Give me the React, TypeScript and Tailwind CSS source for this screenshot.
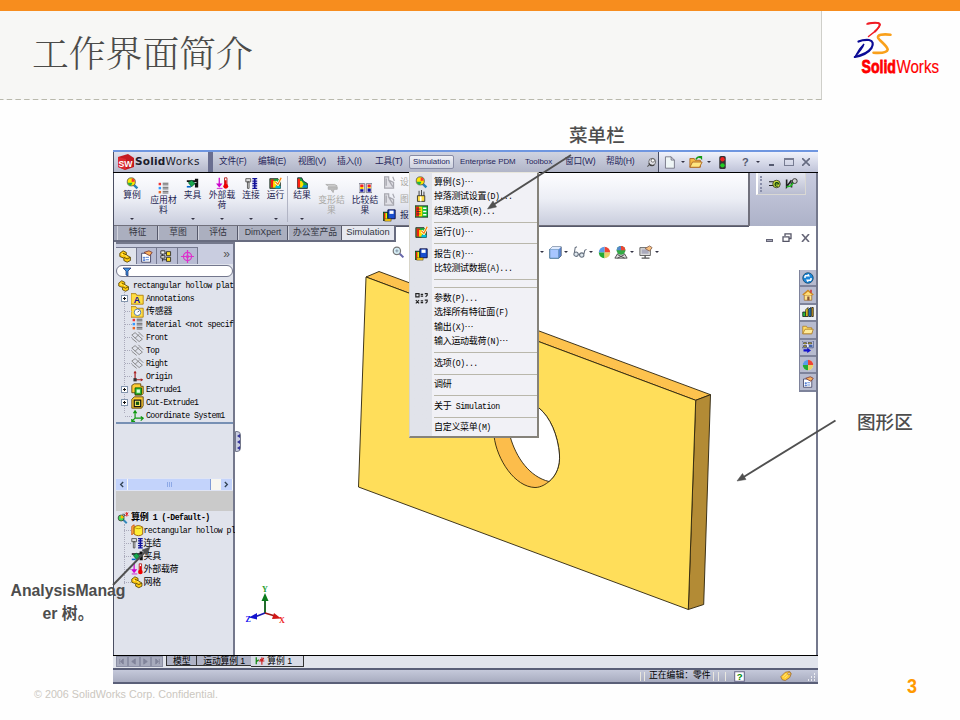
import React from "react";

const SONG = /([\u2026\u2e80-\u9fff\uff00-\uffef]+)/;

// Mixed text: full-width glyphs and half-width mono glyphs keep a 2:1 pitch.
function Song({ t, bold = false }: { t: string; bold?: boolean }) {
  return (
    <span className={"font-['Liberation_Mono','Noto_Sans_CJK_SC',monospace] text-[8px] leading-[12px] whitespace-pre " + (bold ? "font-bold" : "")}>
      {t.split(SONG).map((p, i) =>
        i % 2 ? (
          <span key={i} className="font-['Noto_Sans_CJK_SC',sans-serif] text-[9px] leading-[11px] tracking-[-0.3px]">{p}</span>
        ) : (
          <span key={i} className="text-[8.2px] tracking-[-0.54px]">{p}</span>
        )
      )}
    </span>
  );
}

type Name =
  | "lens" | "list" | "clamp" | "load" | "bolt" | "run" | "result" | "deform" | "compare" | "report" | "drop"
  | "param" | "part" | "prop" | "config" | "target" | "annot" | "sensor" | "plane" | "origin" | "extrude" | "cut"
  | "coord" | "solid" | "study" | "graph" | "globe" | "house" | "books" | "folder" | "palette" | "ball" | "scene"
  | "monitor" | "cube" | "glasses" | "zoom" | "doc" | "open" | "light" | "pin" | "plug" | "clip" | "tag" | "help" | "motion" | "reportGray";

const art: Record<Name, React.ReactNode> = {
  lens: (
    <>
      <path d="M9 9l5 5" stroke="#2a80b8" strokeWidth="3" />
      <circle cx="6.5" cy="6" r="5" fill="#ffe600" stroke="#555" />
      <path d="M2 7a5 5 0 0 0 4 4l2-4z" fill="#1fb24a" />
      <path d="M7 1.5a5 5 0 0 1 4 4L7 6z" fill="#f33" />
    </>
  ),
  list: (
    <>
      <path d="M2 1h3v3H2z" fill="#e33" /><path d="M2 6h3v3H2z" fill="#39f" /><path d="M2 11h3v3H2z" fill="#e62" />
      <path d="M7 1.5h7M7 3.5h7M7 6.5h7M7 8.5h7M7 11.5h7M7 13.5h7" stroke="#444" />
    </>
  ),
  clamp: (
    <>
      <path d="M1 5h11V3h2v9h-2V8H7" fill="none" stroke="#111" strokeWidth="2" />
      <path d="M3 7l4-3 4 4-4 4z" fill="#19a84c" stroke="#063" /><path d="M1 12h5" stroke="#06c" strokeWidth="2" />
    </>
  ),
  load: (
    <>
      <path d="M4 1v9" stroke="#c0c" strokeWidth="1.5" /><path d="M0 8h8l-4 5z" fill="#c0c" /><path d="M1 14h7" stroke="#c0c" />
      <path d="M10.5 1h3v9h-3z" fill="#fff" stroke="#a00" /><circle cx="12" cy="11.5" r="3" fill="#e00" /><path d="M12 4v8" stroke="#e00" strokeWidth="2" />
    </>
  ),
  bolt: (
    <>
      <path d="M1 2h6v4H1zM3 6h2v8H3z" fill="#ddd" stroke="#444" />
      <path d="M9 2h6M9 5h6M9 8h6M9 11h6M9 14h6" stroke="#119" strokeWidth="1.6" /><path d="M12 2v12" stroke="#119" strokeWidth="2" />
    </>
  ),
  run: (
    <>
      <path d="M1 2h10l3 3v9H1z" fill="#1fae3f" stroke="#222" /><path d="M2 3h4v10H2z" fill="#e21" /><path d="M5 5h4v8H5z" fill="#fd0" />
      <path d="M8 6l3 3 4-8" stroke="#ffd" strokeWidth="3.5" fill="none" /><path d="M8 6l3 3 4-8" stroke="#f70" strokeWidth="1.5" fill="none" /><path d="M8 11h6v3H8z" fill="#0bd" />
    </>
  ),
  result: (
    <>
      <path d="M2 1h5l2 4 5 3v6H2z" fill="#17a83b" stroke="#113" /><path d="M2 2h3v11H2z" fill="#f21" /><path d="M5 5h2l2 3v5H5z" fill="#fd0" /><path d="M9 10h5v3H7z" fill="#08d" />
    </>
  ),
  deform: (
    <>
      <path d="M1 3h11l3 2H4z" fill="#ddd" stroke="#aaa" /><path d="M4 6h11v3h-4l-1 4-3-4H4z" fill="#bbb" stroke="#aaa" />
    </>
  ),
  compare: (
    <>
      <path d="M0 2h7v11H0z" fill="#fff" stroke="#667" /><path d="M9 2h7v11H9z" fill="#fff" stroke="#667" />
      <path d="M1.5 3h4v3h-4zM10.500 3h4v3h-4z" fill="#e22" /><path d="M1.5 6h4v3h-4zM10.500 6h4v2h-4z" fill="#fc0" /><path d="M1.5 9h4v3h-4zM10.500 8h4v4h-4z" fill="#119" />
    </>
  ),
  report: (
    <>
      <path d="M0 4h7v10H0z" fill="#0b3" stroke="#111" /><path d="M1 5h2v8H1z" fill="#e11" /><path d="M3 5h2v8H3z" fill="#fd0" />
      <path d="M6 1h9v11H6z" fill="#1a4fd0" stroke="#003" /><path d="M8 2h5v4H8z" fill="#fff" /><path d="M2 12h8v3H2z" fill="#fc1" stroke="#222" strokeWidth=".5" />
    </>
  ),
  reportGray: (
    <path d="M2 1h5v4l6 3v7H2zM4 3v9M7 5l5 8M12 1l2 5" fill="#e0e0e6" stroke="#a8a8b0" strokeWidth="1.5" />
  ),
  drop: (
    <>
      <path d="M3 7h9v7H3z" fill="#fd4" stroke="#222" /><path d="M5 1v6M8 0v7M11 2v5" stroke="#222" /><path d="M7 8v6" stroke="#fff" strokeWidth="2" />
    </>
  ),
  param: (
    <path d="M1 2h4v4H1zM1 10l4 4M5 10l-4 4M7 3h3M7 5h3M7 11h3M7 13h3M12 2h3v2l-2 2M12 10h3v2l-2 2" stroke="#222" strokeWidth="1.4" fill="none" />
  ),
  part: (
    <>
      <path d="M1 4l4-3 4 2v3l5 3v4l-4 2-4-2v-3L1 8z" fill="#fc1" stroke="#4a3800" /><path d="M5 4l4 2M6 9l4 2 4-2" stroke="#4a3800" fill="none" /><path d="M3 5l2 1M8 7l2 1" stroke="#fff8b0" />
    </>
  ),
  prop: (
    <>
      <path d="M2 4h11v11H2z" fill="#fff" stroke="#335" /><path d="M4 9h2v1H4zM4 12h2v1H4zM7 9h4M7 12h4" stroke="#36c" />
      <path d="M5 3l6-2 4 2-3 4-4-2z" fill="#f9b25c" stroke="#733" />
    </>
  ),
  config: (
    <>
      <path d="M3 1v13M3 4h5M3 12h5" stroke="#222" fill="none" /><path d="M1 1h5v4H1zM1 7h5v3H1z" fill="#eee" stroke="#222" />
      <path d="M8 2h5v5H8zM8 9h5v5H8z" fill="#fd2" stroke="#222" />
    </>
  ),
  target: (
    <>
      <circle cx="8" cy="8" r="5" fill="none" stroke="#d3c" strokeWidth="1.5" /><path d="M8 0v16M0 8h16" stroke="#d3c" strokeWidth="1.5" /><circle cx="8" cy="8" r="2" fill="#d3c" />
    </>
  ),
  annot: (
    <>
      <path d="M0 2h6l1 2h8v11H0z" fill="#fd4" stroke="#a70" /><text x="3.500" y="13.500" fontSize="11" fontWeight="bold" fontFamily="Liberation Sans" fill="#119">A</text>
    </>
  ),
  sensor: (
    <>
      <path d="M0 2h6l1 2h8v11H0z" fill="#fd4" stroke="#a70" /><circle cx="8" cy="9" r="4" fill="#fff" stroke="#36a" /><path d="M8 9l2-2" stroke="#222" />
    </>
  ),
  plane: (
    <path d="M1 5l4-3 9 8-4 3zM5 9l5-5M1 9l6 5M9 1l6 6" stroke="#777" fill="none" />
  ),
  origin: (
    <>
      <path d="M5 2v10h9" stroke="#a22" strokeWidth="1.5" fill="none" /><path d="M3 4l2-3 2 3zM12 10l3 2-3 2z" fill="#a22" /><path d="M3 10h4v4H3z" fill="#333" />
    </>
  ),
  extrude: (
    <>
      <path d="M1 3l3-2h8v3h3v9l-2 2H5V12H1z" fill="#fc3" stroke="#553a00" /><path d="M5 6h8v8H5z" fill="#3b3" stroke="#050" /><path d="M7 8h4v4H7z" fill="#dfd" />
    </>
  ),
  cut: (
    <>
      <path d="M1 4l3-3h11v11l-2 3H1z" fill="#fc3" stroke="#553a00" /><path d="M4 5h8v8H4z" fill="#fe6" stroke="#111" strokeWidth="1.5" /><path d="M6 7h4v4H6z" fill="#151" />
    </>
  ),
  coord: (
    <path d="M5 1v9h9M5 10l-4 4M3 4l2-3 2 3M12 8l3 2-3 3M1 11v3h4" stroke="#191" strokeWidth="1.5" fill="none" />
  ),
  solid: (
    <>
      <path d="M1 3l3-2v10l-3 3z" fill="#fb4" stroke="#c40" /><path d="M4 4q5-4 11 0v9q-5 4-11 0z" fill="#fe3" stroke="#840" /><path d="M4 4q5 4 11 0" stroke="#a80" fill="none" />
    </>
  ),
  study: (
    <>
      <path d="M8 10l5 5" stroke="#38b" strokeWidth="2.5" /><circle cx="5.5" cy="8" r="4" fill="#4d5" stroke="#333" /><path d="M5 4.500a4 4 0 0 1 4 3L5 9z" fill="#fb0" />
      <path d="M7 3h3v3" stroke="#333" /><path d="M11 1l4 4M15 1l-4 4M13 0v6" stroke="#d22" strokeWidth="1.3" />
    </>
  ),
  graph: (
    <>
      <path d="M0 1h16v14H0z" fill="#1b3" stroke="#222" /><path d="M1 2h4v12H1z" fill="#e21" /><path d="M5 2h4v12H5z" fill="#fd0" /><path d="M2 5h5M2 8h5M2 11h5" stroke="#333" /><path d="M10 4h4M10 8h4M10 12h4" stroke="#fff" strokeWidth="2" />
    </>
  ),
  globe: (
    <>
      <circle cx="8" cy="8" r="7" fill="#1c86d8" stroke="#146" /><path d="M4 5h5l-1-2M12 11H7l1 2M4 8V5M12 8v3" stroke="#fff" strokeWidth="2" fill="none" />
    </>
  ),
  house: (
    <>
      <path d="M3 8h10v7H3z" fill="#ffe48a" stroke="#963" /><path d="M1 8l7-6 7 6" stroke="#c82" strokeWidth="2" fill="#fd7" /><path d="M7 10h3v5H7z" fill="#853" /><path d="M11 1h2v4h-2z" fill="#c33" />
    </>
  ),
  books: (
    <>
      <path d="M1 8h4v6H1z" fill="#2b4" stroke="#111" /><path d="M5 5l3-3v12H5z" fill="#fd2" stroke="#111" /><path d="M9 4l3-2v12H9z" fill="#28c" stroke="#111" /><path d="M13 2h2v12h-2z" fill="#eb2" stroke="#111" />
    </>
  ),
  folder: (
    <>
      <path d="M1 3h5l1 2h6v8H1z" fill="#fd6" stroke="#a72" /><path d="M4 7h11l-2 6H1z" fill="#ffec9a" stroke="#a72" />
    </>
  ),
  palette: (
    <>
      <path d="M0 0h15v9H0z" fill="#eef" stroke="#347" /><path d="M2 2h4v2H2zM8 2h5v2H8zM2 6h4v2H2z" fill="#cb2" stroke="#224" strokeWidth=".8" /><path d="M9 5h5v3H9z" fill="#46a" />
      <path d="M2 11h5V9l5 3.5L7 16v-2H2z" fill="#11c" />
    </>
  ),
  ball: (
    <>
      <circle cx="8" cy="8" r="7" fill="#eee" /><path d="M8 8V1a7 7 0 0 1 7 7z" fill="#e43" /><path d="M8 8H1a7 7 0 0 1 7-7z" fill="#5a9be8" /><path d="M8 8v7a7 7 0 0 1-7-7z" fill="#2a3" /><path d="M8 8h7a7 7 0 0 1-7 7z" fill="#e8d26a" />
    </>
  ),
  scene: (
    <>
      <path d="M1 15l3-5h8l3 5zM4 11l8 4M12 11l-8 4" fill="#ddd" stroke="#444" />
      <circle cx="8" cy="6" r="5" fill="#3a4" /><path d="M8 6V1a5 5 0 0 1 5 5z" fill="#e43" /><path d="M8 6H3a5 5 0 0 1 5-5z" fill="#58c" />
    </>
  ),
  monitor: (
    <>
      <path d="M1 3h12v9H1z" fill="#ddd" stroke="#555" /><path d="M3 5h8v5H3z" fill="#aab" /><path d="M3 15h9M7 12v3" stroke="#555" strokeWidth="1.5" /><path d="M7 4l5-3 3 2-3 4z" fill="#f8c080" stroke="#865" />
    </>
  ),
  cube: (
    <>
      <path d="M1 4l3-3h11v11l-3 3H1z" fill="#5f8ae0" stroke="#456" /><path d="M1 4h11v11H1z" fill="#a8c6ff" stroke="#58a" /><path d="M1 4l3-3h11l-3 3z" fill="#e0ebff" />
    </>
  ),
  glasses: (
    <>
      <circle cx="3.500" cy="10.500" r="2.500" fill="#dfe8ee" stroke="#66707e" strokeWidth="1.2" /><circle cx="10" cy="11.500" r="2.500" fill="#dfe8ee" stroke="#66707e" strokeWidth="1.2" />
      <path d="M6 10.500l2 .5M1.500 9l1-6 2-1M12.500 10l1-4 2-1" stroke="#66707e" strokeWidth="1.2" />
    </>
  ),
  zoom: (
    <>
      <circle cx="6" cy="6" r="4.500" fill="#d8f0f8" stroke="#777" strokeWidth="1.5" /><path d="M4 6h4M6 4v4" stroke="#789" /><path d="M9.500 9.500l4.500 4.500" stroke="#66a" strokeWidth="2.5" />
    </>
  ),
  doc: <path d="M3 1h7l4 4v10H3zM10 1v4h4" fill="#eef5f6" stroke="#667" />,
  open: (
    <>
      <path d="M1 4h5l1 2h6v8H1z" fill="#f5b942" stroke="#a62" /><path d="M4 8h11l-3 6H1z" fill="#ffe680" stroke="#a62" /><path d="M8 5q2-4 5-2" stroke="#191" strokeWidth="1.8" fill="none" /><path d="M11 1h4v5z" fill="#191" />
    </>
  ),
  light: (
    <>
      <rect x="4" y="0" width="8" height="16" rx="2" fill="#333" /><circle cx="8" cy="4" r="2.7" fill="#e22" /><circle cx="8" cy="11.5" r="2.7" fill="#2c2" />
    </>
  ),
  pin: (
    <>
      <path d="M6 10l-4 4" stroke="#555" strokeWidth="1.5" /><circle cx="9" cy="7" r="5" fill="#e0e0e6" stroke="#444" /><circle cx="10" cy="5" r="2.5" fill="#fff" stroke="#444" /><path d="M4 9q2 5 8 3" stroke="#444" fill="none" strokeWidth="1.5" />
    </>
  ),
  plug: (
    <>
      <path d="M0 5h6M0 10h6" stroke="#222" strokeWidth="1.5" /><circle cx="10" cy="8" r="5" fill="#cde33a" stroke="#222" /><path d="M8 8h5a2.500 2.500 0 1 0-1 2.500" stroke="#141" strokeWidth="1.5" fill="none" />
    </>
  ),
  clip: (
    <>
      <path d="M2 3v9l6-8M8 13V8l6-5" stroke="#222" strokeWidth="2" fill="none" /><path d="M2 12l5-1 4-5" stroke="#2b2" strokeWidth="2" fill="none" /><circle cx="12" cy="5" r="3" fill="#ccc" stroke="#222" />
    </>
  ),
  tag: (
    <>
      <path d="M1 9l6-6 6-1 2 3-2 5-6 4-4-1z" fill="#fc3" stroke="#963" /><circle cx="12" cy="5" r="1.5" fill="#fff" stroke="#963" /><path d="M4 9l4-4M6 11l4-4" stroke="#fff2a0" />
    </>
  ),
  help: (
    <>
      <path d="M1 1h14v14H1z" fill="#fff" stroke="#668" strokeWidth="1.5" /><text x="4" y="13.5" fontSize="14" fontWeight="bold" fontFamily="Liberation Sans" fill="#080">?</text>
    </>
  ),
  motion: (
    <>
      <path d="M2 2v11M2 9l4-3" stroke="#181" strokeWidth="2" /><path d="M6 8h9M11 2v12M8 5l3 3 3-5" stroke="#c22" strokeWidth="1.8" fill="none" />
    </>
  ),
};

function Icon({ n, className = "size-3" }: { n: Name; className?: string }) {
  return (
    <svg viewBox="0 0 16 16" fill="none" className={"shrink-0 " + className}>
      {art[n]}
    </svg>
  );
}

const Caret = ({ className = "" }: { className?: string }) => (
  <svg viewBox="0 0 4 2" className={"h-[2px] w-1 shrink-0 " + className}>
    <path d="M0 0h4L2 2z" fill="#334" />
  </svg>
);

function Logo() {
  return (
    <svg viewBox="0 0 100 58" className="h-[58px] w-[100px]" fill="none" strokeLinecap="round">
      <path d="M16 4Q28 1 29 4.500Q29 8 17.500 16.500" stroke="#f01c24" strokeWidth="1.5" />
      <path d="M17 3.600Q28 1.500 28.800 4.500Q28.500 7 24 11.500" stroke="#f01c24" strokeWidth="2" />
      <path d="M7.500 21.500Q12 19.600 18 20Q24 21.500 20.500 28Q16 34.500 3.800 37" stroke="#0b0b95" strokeWidth="2.200" />
      <path d="M13 24Q12 28 3.800 37L8.500 29Z" stroke="#0b0b95" strokeWidth="1.2" fill="#0b0b95" />
      <path d="M39.500 14.700Q26.500 13.500 27 17.500C27.500 20 36.500 26 36.700 29.500Q36 33.700 22.500 32.700" stroke="#f9a01b" strokeWidth="2.600" />
      <text x="10.5" y="52.500" textLength="34.500" lengthAdjust="spacingAndGlyphs" fontFamily="Liberation Sans" fontWeight="bold" fontSize="19" fill="#f00" stroke="#f00" strokeWidth=".8">Solid</text>
      <text x="45.5" y="52.500" textLength="42.500" lengthAdjust="spacingAndGlyphs" fontFamily="Liberation Sans" fontSize="19" fill="#f00" stroke="#f00" strokeWidth=".2">Works</text>
    </svg>
  );
}

const UI = "font-['Liberation_Sans','Noto_Sans_CJK_SC',sans-serif]";

function MenuBar() {
  const menus: [string, string][] = [
    ["文件(F)", "w-[39px]"], ["编辑(E)", "w-[40px]"], ["视图(V)", "w-[39px]"], ["插入(I)", "w-[38px]"], ["工具(T)", "w-[34px]"],
    ["Simulation", ""], ["Enterprise PDM", "w-[65px]"], ["Toolbox", "w-[40px]"], ["窗口(W)", "w-[41px]"], ["帮助(H)", "w-[40px]"],
  ];
  return (
    <div className={"flex h-[23px] shrink-0 items-stretch border-t-2 border-b border-t-[#6f96e0] border-b-black text-[8.7px] text-[#25255a] " + UI}>
      <div className="flex w-[95px] items-center border-l border-[#4a4e62] bg-linear-to-b from-[#dfe2ee] to-[#b4b8cb] pl-[4px]">
        <svg viewBox="0 0 16 16" className="size-[16px] shrink-0">
          <path d="M0 3l10-3 6 4v9l-9 3-7-3z" fill="#c41a22" />
          <path d="M0 3l8 2v11l-8-3z" fill="#dd2a30" />
          <text x="0.5" y="12.5" fontSize="9" fontWeight="bold" fontFamily="Liberation Sans" fill="#fff" textLength="14" lengthAdjust="spacingAndGlyphs">SW</text>
        </svg>
        <span className="ml-px font-['DejaVu_Sans'] text-[10.5px] tracking-[0.45px] text-[#1c1c2c]"><b className="tracking-[0.2px]">Solid</b>Works</span>
      </div>
      <div className="w-[5px] bg-[#696e90]" />
      <div className="flex w-[446px] items-center border-r border-[#444a60] bg-linear-to-b from-[#cfd3e1] to-[#b1b5c8] pl-[6px]">
        {menus.map(([m, w]) =>
          m === "Simulation" ? (
            <div key={m} className="mr-[6px] flex h-[14px] w-[45px] items-center justify-center rounded-[2px] border border-[#888ca5] bg-linear-to-b from-[#f1f2f7] to-[#ccd0de] text-[7.9px]">{m}</div>
          ) : (
            <div key={m} className={"shrink-0 whitespace-nowrap " + w + (m.includes("(") ? " tracking-[-0.2px]" : " text-[7.9px]")}>{m}</div>
          )
        )}
        <Icon n="pin" className="size-[11px]" />
      </div>
      <div className="flex flex-1 items-center bg-linear-to-b from-[#f0f2fb] to-[#bfc3d8] pl-[4px]">
        <Icon n="doc" className="size-[13px]" /><Caret className="ml-[5px]" />
        <Icon n="open" className="ml-[4px] size-[14px]" /><Caret className="ml-[4px]" />
        <Icon n="light" className="ml-[5px] size-[13px]" />
        <b className="ml-[13px] text-[11px] text-[#555a70]">?</b><Caret className="ml-[7px]" />
        <i className="mt-[6px] ml-[9px] h-[2px] w-[5px] bg-[#555a70]" />
        <i className="ml-[10px] h-[8px] w-[10px] border border-t-2 border-[#777c92]" />
        <svg viewBox="0 0 8 8" className="ml-[8px] size-[8px]"><path d="M0 0l8 8M8 0L0 8" stroke="#666b80" strokeWidth="1.6" /></svg>
      </div>
    </div>
  );
}

function Tool({ n, a, b, w, top, caret, gray }: { n: Name; a: string; b?: string; w: string; top: string; caret?: boolean; gray?: boolean }) {
  return (
    <div className={"flex h-full shrink-0 flex-col items-center text-center text-[8.8px] leading-[10px] whitespace-nowrap " + w + " " + top + (gray ? " text-[#aaa9a5]" : " text-[#1d1d50]")}>
      <Icon n={n} className="h-[13px] w-[13px]" />
      <div>{a}</div>
      <div className="h-[9px]">{b}</div>
      {caret && <Caret className="mt-[9px]" />}
    </div>
  );
}

function Ribbon() {
  return (
    <div className={"flex h-[53px] shrink-0 " + UI}>
      <div className="flex w-[636px] border-r-2 border-b border-[#70707c] bg-linear-to-b from-[#fdfdff] via-[#eceef5] to-[#c9cddd] pl-[2px]">
        <Tool n="lens" a="算例" w="w-[32px]" top="pt-[4px]" caret />
        <Tool n="list" a="应用材" b="料" w="w-[31px]" top="pt-[9px]" />
        <Tool n="clamp" a="夹具" w="w-[27px]" top="pt-[4px]" caret />
        <Tool n="load" a="外部载" b="荷" w="w-[32px]" top="pt-[4px]" caret />
        <Tool n="bolt" a="连接" w="w-[26px]" top="pt-[4px]" caret />
        <Tool n="run" a="运行" w="w-[23px]" top="pt-[4px]" caret />
        <div className="mt-[3px] h-[46px] w-px bg-[#b2b5c5]" />
        <Tool n="result" a="结果" w="w-[28px]" top="pt-[4px]" caret />
        <Tool n="deform" a="变形结" b="果" w="w-[31px]" top="pt-[9px]" gray />
        <Tool n="compare" a="比较结" b="果" w="w-[36px]" top="pt-[9px]" />
        <div className="flex flex-col gap-[4px] pt-[3px] text-[8.8px] leading-[13px] text-[#aaa9a5]">
          <div className="flex h-[13px] gap-[4px]"><Icon n="reportGray" className="size-[13px]" />设</div>
          <div className="flex h-[12px] gap-[4px]"><Icon n="reportGray" className="size-[13px]" />图</div>
          <div className="flex h-[13px] gap-[4px] text-[#1d1d50]"><Icon n="report" className="size-[13px]" />报</div>
        </div>
      </div>
      <div className="flex-1 bg-linear-to-b from-[#c9cce0] to-[#adb2c8] pl-[6px]">
        <div className="flex h-[22px] w-[50px] items-center gap-[4px] border-r border-b border-l-2 border-[#d9d8d4] border-l-white bg-linear-to-b from-[#e4e6f0] to-[#b9bdd0] pl-[2px]">
          <i className="h-[16px] border-l-2 border-dotted border-[#888da8]" />
          <Icon n="plug" className="ml-[3px] size-[12px]" /><Icon n="clip" className="size-[13px]" />
        </div>
      </div>
    </div>
  );
}

function CommandTabs() {
  const tabs: [string, string][] = [["特征", "w-[41px]"], ["草图", "w-[40px]"], ["评估", "w-[40px]"], ["DimXpert", "w-[50px]"], ["办公室产品", "w-[54px]"]];
  return (
    <div className={"flex h-[16px] shrink-0 text-[8.8px] leading-[13px] text-[#33363f] " + UI}>
      <div className="flex border-b-2 border-[#686c80] bg-[#a4a8ba] pl-[3px]">
        {tabs.map(([t, w]) => (
          <div key={t} className={"border-r border-l border-r-[#55586a] border-l-[#d0d2dc] bg-[#abafbf] text-center whitespace-nowrap " + w}>{t}</div>
        ))}
      </div>
      <div className="w-[54px] border-r-2 border-b-2 border-[#686c80] bg-[#e6e8f0] text-center text-[9.3px]">Simulation</div>
      <div className="h-px w-[353px] bg-[#55586a]" />
      <div className="flex-1" />
    </div>
  );
}

const tree: [Name, string, boolean][] = [
  ["annot", "Annotations", true], ["sensor", "传感器", false], ["list", "Material <not specif", false], ["plane", "Front", false],
  ["plane", "Top", false], ["plane", "Right", false], ["origin", "Origin", false], ["extrude", "Extrude1", true], ["cut", "Cut-Extrude1", true],
  ["coord", "Coordinate System1", false],
];
const study: [Name, string][] = [["solid", "rectangular hollow pl"], ["bolt", "连结"], ["clamp", "夹具"], ["load", "外部载荷"], ["part", "网格"]];

function LeftPanel() {
  const tabs: Name[] = ["part", "prop", "config", "target"];
  return (
    <div className="flex w-[121px] shrink-0 flex-col border-r-2 border-[#74788c] bg-[#e0e3ec] pl-[2px] text-black">
      <div className="flex h-[22px] shrink-0 border-t-2 border-[#74788c] bg-[#c9cde0] pt-[3px]">
        {tabs.map((t, i) => (
          <div key={t} className={"flex w-[20.5px] items-center justify-center border-t border-r border-[#757990] " + (i ? "bg-[#b8bcd3]" : "bg-[#e0e3ec]")}>
            <Icon n={t} className="size-[13px]" />
          </div>
        ))}
        <div className="flex-1 pr-[3px] text-right font-['Liberation_Sans'] text-[12px] leading-[14px] text-[#555]">»</div>
      </div>
      <div className="mt-[1px] flex h-[12px] w-[117px] shrink-0 items-center rounded-full border border-[#73778d] bg-white pl-[6px]">
        <svg viewBox="0 0 8 9" className="h-[9px] w-[8px]"><path d="M0 1h8L5 4v5L3 8V4z" fill="#3f91dd" stroke="#126" strokeWidth=".7" /></svg>
      </div>
      <div className="relative flex h-[147px] shrink-0 flex-col border-b-2 border-[#7790b4] pt-[2px]">
        <div className="absolute top-[15px] left-[8px] h-[121px] border-l border-dotted border-[#aab]" />
        <div className="flex h-[13.1px] shrink-0 items-center gap-[3px] pl-[2px]"><Icon n="part" /><Song t="rectangular hollow plat" /></div>
        {tree.map(([n, t, plus]) => (
          <div key={t} className="relative flex h-[13.05px] shrink-0 items-center gap-[2px] pl-[5px]">
            {plus ? (
              <svg viewBox="0 0 7 7" className="size-[7px] shrink-0"><rect x=".5" y=".5" width="6" height="6" fill="#fff" stroke="#8395ad" /><path d="M2 3.5h3M3.5 2v3" stroke="#111" /></svg>
            ) : <i className="w-[7px] shrink-0 translate-x-[4px] border-t border-dotted border-[#aab]" />}
            <Icon n={n} className="ml-px size-[13px]" />
            <Song t={t} />
          </div>
        ))}
      </div>
      <div className="h-[54px] shrink-0" />
      <div className="flex h-[13px] shrink-0 border-y border-[#dfe4f4] bg-[#f7f6f0]">
        {["l", "m", "r"].map((s) =>
          s === "m" ? (
            <div key={s} className="flex w-[83px] items-center justify-center gap-px border-r border-[#7e9ad6] bg-[#c3d3fb]"><i className="h-[5px] w-px bg-[#8ea9e6]" /><i className="h-[5px] w-px bg-[#8ea9e6]" /><i className="h-[5px] w-px bg-[#8ea9e6]" /></div>
          ) : (
            <div key={s} className={"flex w-[11px] items-center justify-center bg-[#c3d3fb] " + (s === "r" ? "ml-auto mr-px" : "mr-px")}>
              <svg viewBox="0 0 6 8" className="h-[7px] w-[5px]"><path d={s === "r" ? "M1 1l3 3-3 3" : "M5 1L2 4l3 3"} stroke="#345" strokeWidth="1.6" fill="none" /></svg>
            </div>
          )
        )}
      </div>
      <div className="h-[20px] shrink-0 bg-[#cacaca]" />
      <div className="relative flex flex-1 flex-col">
        <div className="absolute top-[13px] left-[8px] h-[60px] border-l border-dotted border-[#aab]" />
        <div className="flex h-[13px] shrink-0 items-center gap-[2px] pl-[1px]"><Icon n="study" /><Song bold t="算例 1 (-Default-)" /></div>
        {study.map(([n, t]) => (
          <div key={t} className="flex h-[13px] shrink-0 items-center pl-[8px]">
            <i className="w-[7px] shrink-0 border-t border-dotted border-[#aab]" />
            <Icon n={n} className="size-[12.5px]" />
            <Song t={t} />
          </div>
        ))}
      </div>
    </div>
  );
}

function Viewport() {
  const pane: Name[] = ["globe", "house", "books", "folder", "palette", "ball", "prop"];
  return (
    <div className="relative flex-1 bg-white">
      <svg viewBox="235 242 581 413" className="absolute inset-0 h-[413px] w-[581px]" strokeLinejoin="round">
        <g stroke="#2b230c" strokeWidth="0.9">
          <path d="M366 277L379 271.5L710.5 394.7L695.7 400.3Z" fill="#fdc24e" />
          <path d="M695.7 400.3L710.5 394.7L703.7 604.5L688.3 609.5Z" fill="#b38b35" />
          <path d="M366 277L695.7 400.3L688.3 609.5L358.5 487Z" fill="#ffde5a" />
          <path d="M494 436C497 460 515 487 535 487.5C541 487.5 546 484 549 481.5C557 475 560 465 559.5 455C558 435 550 417 539 408L515 400Z" fill="#fcbd4b" />
          <path d="M510 436C516 458 530 477 549 481.5C557 475 560 465 559.5 455C558 435 550 417 539 408L515 400Z" fill="#fff" />
        </g>
        <g fontFamily="Liberation Serif" fontSize="8" fontWeight="bold">
          <path d="M265 613V600" stroke="#0a5c14" strokeWidth="1.8" /><path d="M261.5 601l3.500-8 3.500 8z" fill="#0a7a1c" />
          <path d="M265 613l-9 3.500" stroke="#1a1ab0" strokeWidth="1.8" /><path d="M257 613l-8 4.500 8 2z" fill="#1414d0" />
          <path d="M265 613l10 3" stroke="#a01414" strokeWidth="1.8" /><path d="M274 613l7 5.500-9 .5z" fill="#d01818" />
          <text x="262" y="592" fill="#1fa030">Y</text><text x="245.5" y="622" fill="#11e">Z</text><text x="279" y="623" fill="#e22">X</text>
        </g>
      </svg>
      <div className="absolute top-[189px] left-0 flex h-[21px] w-[6px] flex-col items-center justify-center gap-[2px] rounded-r-sm border border-[#74788c] bg-[#c9cde0]">
        {[0, 1, 2].map((k) => <svg key={k} viewBox="0 0 3 4" className="h-[4px] w-[3px]"><path d="M3 0v4L0 2z" fill="#339" /></svg>)}
      </div>
      <div className="relative flex items-center pt-[3px] pl-[157px]">
        <Icon n="zoom" className="size-[13px]" />
        <Caret className="ml-[135px]" />
        <Icon n="cube" className="ml-[5px] size-[13px]" /><Caret className="ml-[2px]" />
        <Icon n="glasses" className="ml-[5px] size-[14px]" /><Caret className="ml-[2px]" />
        <Icon n="ball" className="ml-[5px] size-[13px]" />
        <Icon n="scene" className="ml-[3px] size-[14px]" /><Caret className="ml-[2px]" />
        <Icon n="monitor" className="ml-[5px] size-[14px]" /><Caret className="ml-[2px]" />
      </div>
      <div className="absolute -top-[9px] right-[6px] flex items-center gap-[9px]">
        <i className="mt-[5px] h-[3px] w-[7px] border border-[#667] bg-[#aab]" />
        <svg viewBox="0 0 10 9" className="h-[9px] w-[10px]"><path d="M3 3V.8h6v4.700H7M1 3.800h6v4.700H1z" fill="none" stroke="#556" strokeWidth="1.3" /></svg>
        <svg viewBox="0 0 9 8" className="h-[8px] w-[9px]"><path d="M1 0l7 8M8 0L1 8" stroke="#667" strokeWidth="1.6" /></svg>
      </div>
      <div className="absolute top-[28px] right-0 flex w-[17px] flex-col">
        {pane.map((n, i) => (
          <div key={n} className={"flex h-[17.4px] items-center justify-center border-b-2 border-l border-[#7e839b] " + (i === 2 ? "bg-[#eceef4]" : "bg-[#b7bbcf]")}>
            <Icon n={n} className="size-[12px]" />
          </div>
        ))}
      </div>
    </div>
  );
}

function BottomBars() {
  return (
    <div className={"shrink-0 " + UI}>
      <div className="flex h-[13px] border-t border-black bg-[#e1e4ec] pl-[3px] text-[8.8px] leading-[10px] text-black">
        {["M2 1v6M6 1L3 4l3 3z", "M6 1L2 4l4 3z", "M2 1l4 3-4 3z", "M6 1v6M2 1l3 3-3 3z"].map((d) => (
          <div key={d} className="flex h-[11px] w-[11.8px] items-center justify-center border border-[#8c90a5] bg-[#a7abbd]"><svg viewBox="0 0 8 8" className="size-[7px]"><path d={d} fill="#80849a" stroke="#80849a" /></svg></div>
        ))}
        <div className="ml-[3px] h-[10px] w-[31px] border-r border-b border-l border-[#333] bg-[#aeb2c5] text-center whitespace-nowrap">模型</div>
        <div className="h-[10px] w-[54px] border-b border-[#333] bg-[#aeb2c5] text-center tracking-[-0.1px] whitespace-nowrap">运动算例 1</div>
        <div className="flex h-[11px] w-[53px] items-center gap-[2px] border-r border-b border-[#333] bg-[#d8dbe6] pl-[4px] whitespace-nowrap"><Icon n="motion" className="size-[10px]" />算例 1</div>
      </div>
      <div className="flex h-[16px] items-center justify-end border-t-2 border-b-2 border-[#5a5f78] bg-linear-to-b from-[#c5c9da] to-[#a8acc0] pr-[2px] text-[8.8px] leading-[12px] text-black">
        <i className="mr-[4px] h-[9px] w-[5px] border-x border-[#e9e7e0]" />
        <span className="-mt-[2px] w-[61px] whitespace-nowrap">正在编辑：零件</span>
        <i className="ml-[3px] h-[9px] w-[6px] border-x border-[#e9e7e0]" />
        <i className="ml-[6px] h-[9px] w-px bg-[#e9e7e0]" />
        <Icon n="help" className="ml-[8px] size-[11px]" />
        <Icon n="tag" className="ml-[35px] size-[12px]" />
        <svg viewBox="0 0 9 9" className="mt-[3px] ml-[15px] size-[9px]"><path d="M7 1h1M4 4h1M7 4h1M1 7h1M4 7h1M7 7h1" stroke="#fff" strokeWidth="1.6" /></svg>
      </div>
    </div>
  );
}

type Item = { t?: string; n?: Name; h: string };
const items: Item[] = [
  { t: "算例(S)…", n: "lens", h: "h-[14.5px]" }, { t: "掉落测试设置(D)...", n: "drop", h: "h-[14.5px]" }, { t: "结果选项(R)...", n: "graph", h: "h-[14.5px]" },
  { h: "h-[7px]" }, { t: "运行(U)…", n: "run", h: "h-[14.5px]" }, { h: "h-[7px]" },
  { t: "报告(R)…", n: "report", h: "h-[14.5px]" }, { t: "比较测试数据(A)...", h: "h-[14.5px]" }, { h: "h-[7px]" }, { h: "h-[8px]" },
  { t: "参数(P)...", n: "param", h: "h-[14.5px]" }, { t: "选择所有特征面(F)", h: "h-[14.5px]" }, { t: "输出(X)…", h: "h-[14.5px]" }, { t: "输入运动载荷(N)…", h: "h-[14.5px]" },
  { h: "h-[7px]" }, { t: "选项(O)...", h: "h-[14.5px]" }, { h: "h-[7px]" }, { t: "调研", h: "h-[14.5px]" }, { h: "h-[7px]" },
  { t: "关于 Simulation", h: "h-[14.5px]" }, { h: "h-[7px]" }, { t: "自定义菜单(M)", h: "h-[14.5px]" },
];

function Popup() {
  return (
    <div className="absolute top-[22px] left-[296px] flex h-[266px] w-[130px] flex-col border-t border-r-2 border-b-2 border-l border-[#85827a] border-t-[#e8e6dc] border-l-[#d8d5c9] bg-linear-to-r from-[#e1e3ea] from-[22px] to-[#f1f1f6] to-[22px] pt-[2px] text-black">
      {items.map((it, i) =>
        it.t ? (
          <div key={i} className={"flex shrink-0 items-center " + it.h}>
            <div className="ml-[5px] flex w-[19px]">{it.n && <Icon n={it.n} className="size-[13px]" />}</div>
            <Song t={it.t} />
          </div>
        ) : (
          <div key={i} className={"flex shrink-0 items-center pl-[24px] " + it.h}><i className="h-px w-full bg-[#b9b7ab]" /></div>
        )
      )}
    </div>
  );
}

export default function App() {
  return (
    <div className="relative flex h-[720px] w-[960px] flex-col overflow-hidden bg-[#fefefe]">
      <div className="h-[11px] shrink-0 bg-[#f78d1e]" />
      <header className="flex h-[89px] shrink-0">
        <div className="flex w-[822px] flex-col border-r border-[#cfcfca] bg-[#f7f7f5]">
          <h1 className="h-[88px] pt-[15px] pl-[32px] font-['Noto_Serif_CJK_SC','Noto_Sans_CJK_SC',serif] text-[36.8px] leading-[52px] font-light text-[#4b4b49]">工作界面简介</h1>
          <svg viewBox="0 0 822 1" className="h-px w-[822px]"><path d="M-2 .5h824" stroke="#b9b9ac" strokeDasharray="5.5 3.2" /></svg>
        </div>
        <div className="pt-[9px] pl-[29px]"><Logo /></div>
      </header>
      <main className="relative mt-[50px] ml-[113px] flex h-[534px] w-[705px] shrink-0 flex-col">
        <MenuBar />
        <div className="flex flex-1 flex-col border-r-2 border-l border-r-[#74788c] border-l-[#4a4e62] bg-white">
          <Ribbon />
          <CommandTabs />
          <div className="flex h-[413px] shrink-0">
            <LeftPanel />
            <Viewport />
          </div>
        </div>
        <BottomBars />
        <Popup />
      </main>
      <footer className="flex flex-1 justify-between pr-[43px] pl-[34px] font-['Liberation_Sans']">
        <span className="pt-[3px] text-[10.76px] leading-[14px] text-[#cbc7c0]">© 2006 SolidWorks Corp. Confidential.</span>
        <span className="origin-right scale-x-90 text-[20px] leading-[5px] font-bold text-[#f90]">3</span>
      </footer>
      <svg viewBox="0 0 960 720" className="pointer-events-none absolute inset-0 h-[720px] w-[960px]">
        <g stroke="#505050" strokeWidth="1.9" fill="#505050">
          <path d="M571 155L493 205" /><path d="M487.500 209l5.500-8 3.500 6z" strokeWidth=".5" />
          <path d="M835.5 420.5L742 478" /><path d="M737 481l5.500-7.500 3.500 6z" strokeWidth=".5" />
          <path d="M113 585L146 551" /><path d="M150 547l-8 3 5 5z" strokeWidth=".5" />
        </g>
      </svg>
      <div className="absolute top-[121px] left-[569px] font-['Noto_Sans_CJK_SC',sans-serif] text-[18.6px] leading-[26px] font-medium text-[#4d4d4d]">菜单栏</div>
      <div className="absolute top-[408px] left-[857px] font-['Noto_Sans_CJK_SC',sans-serif] text-[18.6px] leading-[26px] font-medium text-[#4d4d4d]">图形区</div>
      <div className="absolute top-[579px] left-[8px] w-[120px] text-center font-['Liberation_Sans','Noto_Sans_CJK_SC',sans-serif] text-[15.8px] leading-[23px] font-bold text-[#4d4d4d]">
        AnalysisManag<br />er 树。
      </div>
    </div>
  );
}
